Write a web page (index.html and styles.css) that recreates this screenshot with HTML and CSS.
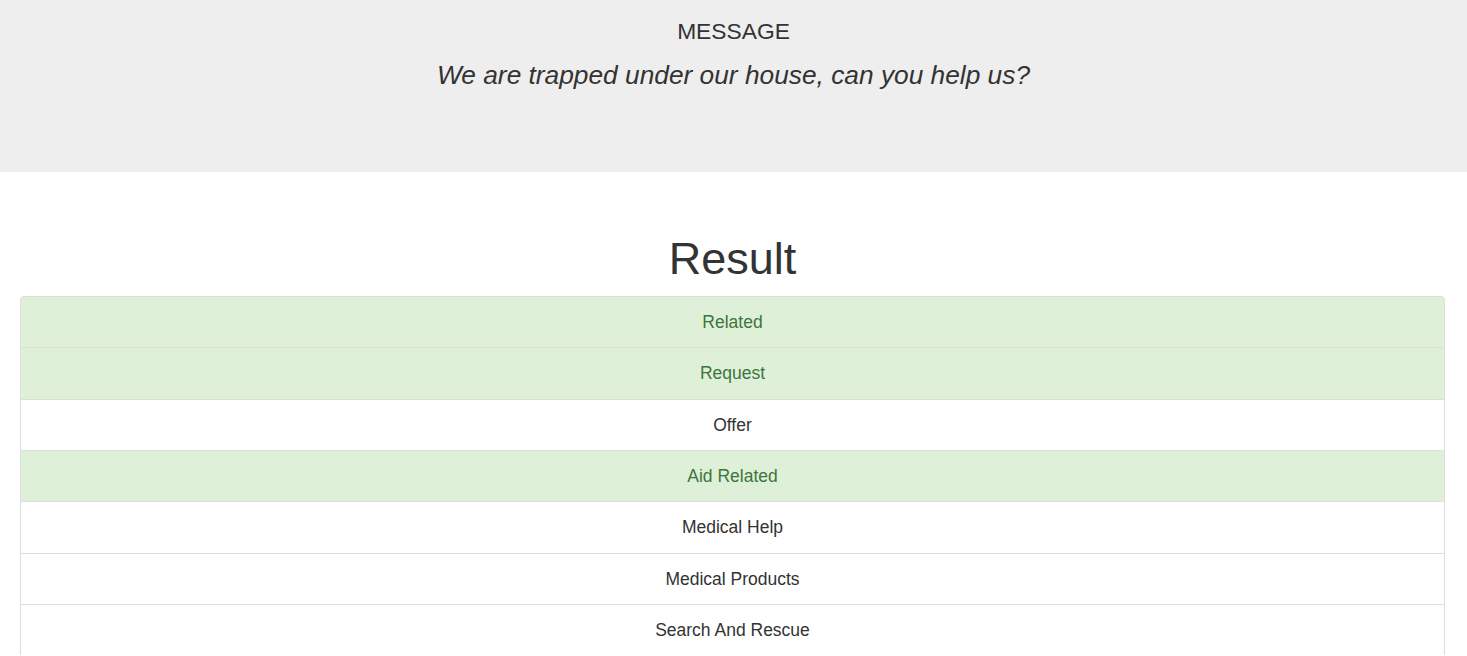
FILE: index.html
```html
<!DOCTYPE html>
<html>
<head>
<meta charset="utf-8">
<link rel="stylesheet" href="styles.css">
</head>
<body>
<div class="hero">
  <div class="hero-label">MESSAGE</div>
  <div class="hero-message">We are trapped under our house, can you help us?</div>
</div>
<div class="content">
  <h1 class="result-title">Result</h1>
  <ul class="list">
    <li class="item item-on">Related</li>
    <li class="item item-on">Request</li>
    <li class="item">Offer</li>
    <li class="item item-on">Aid Related</li>
    <li class="item">Medical Help</li>
    <li class="item">Medical Products</li>
    <li class="item">Search And Rescue</li>
  </ul>
</div>
</body>
</html>
```
FILE: styles.css
```css
html, body {
  margin: 0;
  padding: 0;
}
body {
  font-family: "Liberation Sans", Arial, sans-serif;
  color: #333;
  background: #fff;
}
.hero {
  background: #eee;
  height: 172px;
  box-sizing: border-box;
  padding-top: 18px;
  text-align: center;
}
.hero-label {
  font-size: 22.8px;
  line-height: 26px;
}
.hero-message {
  font-size: 26.3px;
  font-style: italic;
  line-height: 32px;
  margin-top: 15px;
}
.content {
  padding: 0 22px 0 20px;
}
.result-title {
  margin: 0;
  padding-top: 61px;
  font-size: 45px;
  font-weight: normal;
  line-height: 52px;
  text-align: center;
}
.list {
  list-style: none;
  margin: 11px 0 0 0;
  padding: 0;
}
.item {
  display: block;
  text-align: center;
  font-size: 17.5px;
  line-height: 24px;
  padding: 13.17px 18px;
  border: 1px solid #ddd;
  margin-bottom: -1px;
  background: #fff;
}
.item:first-child {
  border-top-left-radius: 4px;
  border-top-right-radius: 4px;
}
.item-on {
  background: #dff0d8;
  color: #3c763d;
}
```
